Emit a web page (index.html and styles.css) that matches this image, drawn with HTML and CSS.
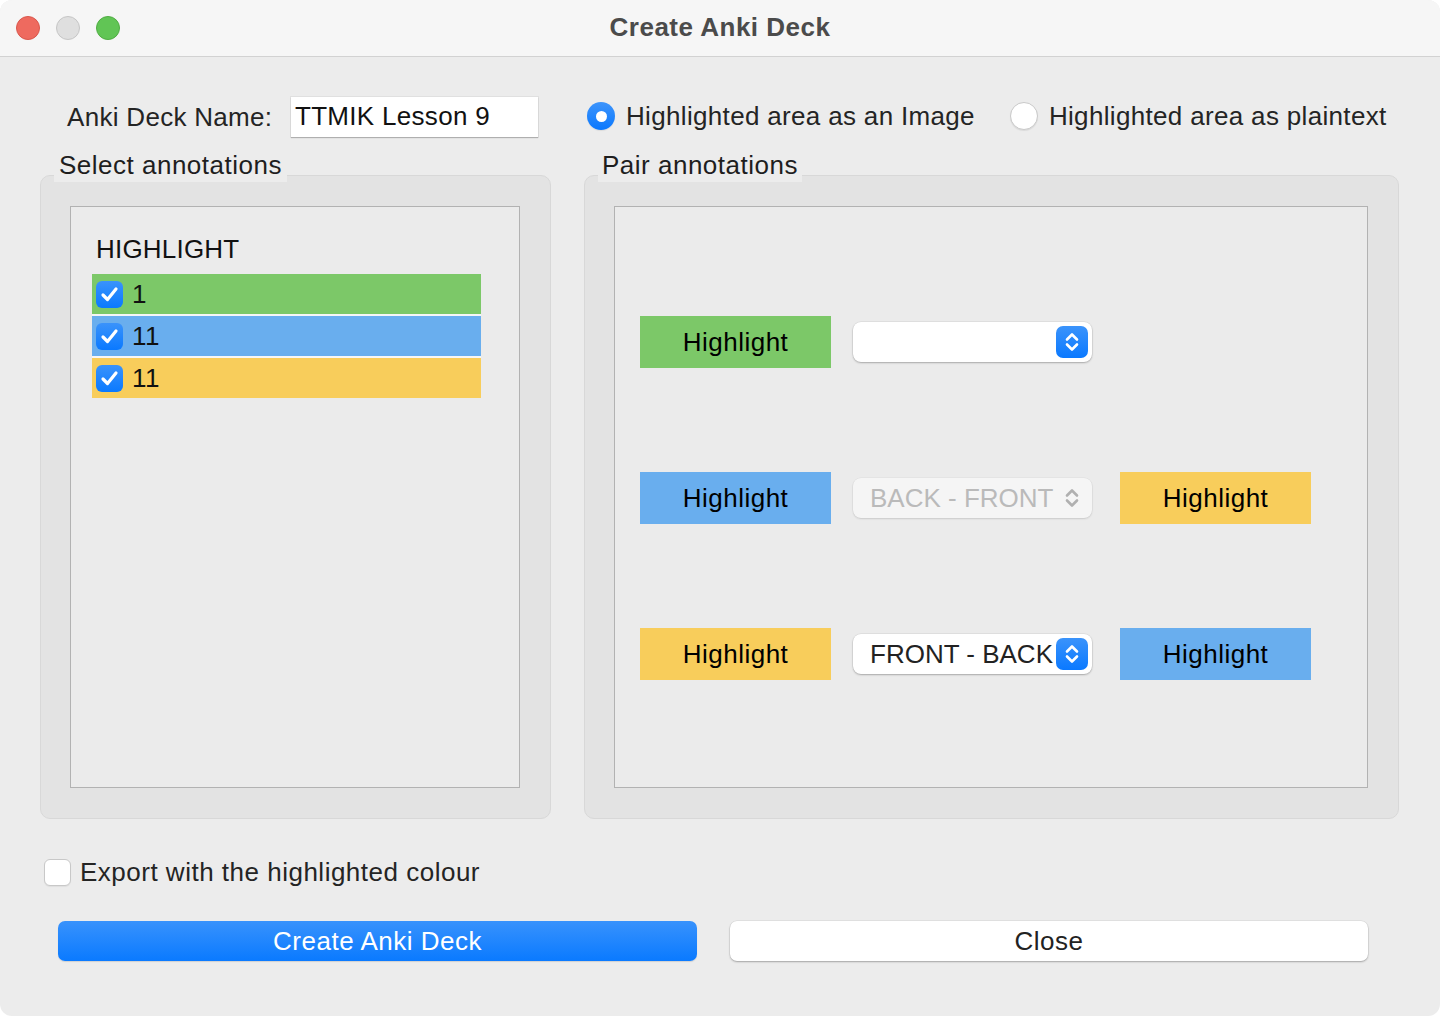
FILE: index.html
```html
<!DOCTYPE html>
<html>
<head>
<meta charset="utf-8">
<title>Create Anki Deck</title>
<link rel="stylesheet" href="styles.css">
</head>
<body>
<div class="window">
  <div class="titlebar">
    <div class="lights">
      <span class="light red"></span>
      <span class="light gray"></span>
      <span class="light green"></span>
    </div>
    <div class="title">Create Anki Deck</div>
    <div></div>
  </div>

  <div class="content">
    <div class="top-row">
      <span class="deck-label">Anki Deck Name:</span>
      <div class="text-input">TTMIK Lesson 9</div>
      <div class="radio-opt first">
        <span class="radio on"><span class="dot"></span></span>
        <span>Highlighted area as an Image</span>
      </div>
      <div class="radio-opt">
        <span class="radio"></span>
        <span>Highlighted area as plaintext</span>
      </div>
    </div>

    <div class="groups">
      <div class="group-wrap left">
        <div class="group-title">Select annotations</div>
        <div class="group">
          <div class="frame list-frame">
            <div class="list-head">HIGHLIGHT</div>
            <div class="rows">
              <div class="row green">
                <span class="cb checked"><svg width="27" height="27" viewBox="0 0 27 27"><path d="M7 14 L11.5 18.5 L20 8" fill="none" stroke="#fff" stroke-width="3.2" stroke-linecap="round" stroke-linejoin="round"/></svg></span>
                <span>1</span>
              </div>
              <div class="row blue">
                <span class="cb checked"><svg width="27" height="27" viewBox="0 0 27 27"><path d="M7 14 L11.5 18.5 L20 8" fill="none" stroke="#fff" stroke-width="3.2" stroke-linecap="round" stroke-linejoin="round"/></svg></span>
                <span>11</span>
              </div>
              <div class="row yellow">
                <span class="cb checked"><svg width="27" height="27" viewBox="0 0 27 27"><path d="M7 14 L11.5 18.5 L20 8" fill="none" stroke="#fff" stroke-width="3.2" stroke-linecap="round" stroke-linejoin="round"/></svg></span>
                <span>11</span>
              </div>
            </div>
          </div>
        </div>
      </div>

      <div class="group-wrap right">
        <div class="group-title">Pair annotations</div>
        <div class="group">
          <div class="frame pair-frame">
            <div class="pair">
              <div class="hl green">Highlight</div>
              <div class="combo">
                <span class="combo-text"></span>
                <span class="stepper"><svg width="32" height="32" viewBox="0 0 32 32"><path d="M11 13.5 L16 8.5 L21 13.5 M11 18.5 L16 23.5 L21 18.5" fill="none" stroke="#fff" stroke-width="2.6" stroke-linecap="round" stroke-linejoin="round"/></svg></span>
              </div>
            </div>
            <div class="pair">
              <div class="hl blue">Highlight</div>
              <div class="combo disabled">
                <span class="combo-text">BACK - FRONT</span>
                <span class="stepper plain"><svg width="32" height="32" viewBox="0 0 32 32"><path d="M11 13.5 L16 8.5 L21 13.5 M11 18.5 L16 23.5 L21 18.5" fill="none" stroke="#b0b0b0" stroke-width="2.6" stroke-linecap="round" stroke-linejoin="round"/></svg></span>
              </div>
              <div class="hl yellow partner">Highlight</div>
            </div>
            <div class="pair">
              <div class="hl yellow">Highlight</div>
              <div class="combo">
                <span class="combo-text">FRONT - BACK</span>
                <span class="stepper"><svg width="32" height="32" viewBox="0 0 32 32"><path d="M11 13.5 L16 8.5 L21 13.5 M11 18.5 L16 23.5 L21 18.5" fill="none" stroke="#fff" stroke-width="2.6" stroke-linecap="round" stroke-linejoin="round"/></svg></span>
              </div>
              <div class="hl blue partner">Highlight</div>
            </div>
          </div>
        </div>
      </div>
    </div>

    <div class="export-row">
      <span class="cb empty"></span>
      <span>Export with the highlighted colour</span>
    </div>

    <div class="buttons">
      <div class="btn primary">Create Anki Deck</div>
      <div class="btn">Close</div>
    </div>
  </div>
</div>
</body>
</html>
```

FILE: styles.css
```css
* { box-sizing: border-box; }

html, body {
  margin: 0;
  padding: 0;
  background: #ffffff;
}

.window {
  width: 1440px;
  height: 1016px;
  border-radius: 12px;
  overflow: hidden;
  background: #ececec;
  font-family: "Liberation Sans", Arial, sans-serif;
  font-size: 26px;
  letter-spacing: 0.5px;
  color: #242424;
}

.titlebar {
  height: 57px;
  background: #f6f6f6;
  border-bottom: 1px solid #d2d2d2;
  display: grid;
  grid-template-columns: 1fr auto 1fr;
  align-items: center;
}

.lights {
  display: flex;
  gap: 16px;
  padding-left: 16px;
  padding-bottom: 1px;
}

.light {
  width: 24px;
  height: 24px;
  border-radius: 50%;
  display: block;
}
.light.red { background: #ee6a5f; border: 1px solid #d9574c; }
.light.gray { background: #dfdfdf; border: 1px solid #c6c6c6; }
.light.green { background: #61c555; border: 1px solid #50ad43; }

.title {
  font-weight: bold;
  color: #4b4b4b;
  font-size: 26px;
  padding-bottom: 1px;
}

.content {
  padding: 40px 41px 0 40px;
}

.top-row {
  display: flex;
  align-items: center;
  height: 40px;
  padding-left: 27px;
}

.deck-label {
  width: 224px;
  flex: none;
  letter-spacing: 0.3px;
}

.text-input {
  width: 247px;
  height: 40px;
  background: #ffffff;
  box-shadow: 0 1px 1px rgba(0,0,0,0.22), 0 0 0 1px rgba(0,0,0,0.05);
  padding: 4px 0 0 4px;
  line-height: 30px;
  color: #111;
  letter-spacing: 0.3px;
}

.radio-opt {
  display: flex;
  align-items: center;
  gap: 11px;
  margin-left: 35px;
  margin-top: -2px;
  letter-spacing: 0.33px;
  white-space: nowrap;
}
.radio-opt.first { margin-left: 49px; }

.radio {
  width: 28px;
  height: 28px;
  border-radius: 50%;
  background: #fff;
  border: 1px solid #c9c9c9;
  box-shadow: 0 1px 1px rgba(0,0,0,0.08);
  display: flex;
  align-items: center;
  justify-content: center;
  flex: none;
}
.radio.on {
  border: none;
  background: linear-gradient(#3d94fb, #0a78fe);
}
.radio .dot {
  width: 11px;
  height: 11px;
  border-radius: 50%;
  background: #fff;
}

.groups {
  display: flex;
  gap: 33px;
  margin-top: 13px;
}

.group-wrap { display: flex; flex-direction: column; }
.group-wrap.left { width: 511px; }
.group-wrap.right { width: 815px; }

.group-title {
  align-self: flex-start;
  margin-left: 14px;
  padding: 0 5px 2px 5px;
  line-height: 30px;
  background: #ececec;
  position: relative;
  z-index: 1;
  margin-bottom: -7px;
  color: #1e1e1e;
}
.group-wrap.right .group-title { padding: 0 4px 2px 4px; }

.group {
  height: 644px;
  background: #e3e3e3;
  border: 1px solid #d8d8d8;
  border-radius: 10px;
  padding: 30px 30px 30px 29px;
}

.frame {
  height: 582px;
  border: 1px solid #b2b2b2;
  background: #ebebeb;
}

.list-frame {
  padding: 27px 0 0 21px;
}

.list-head {
  margin-left: 4px;
  line-height: 30px;
  color: #111;
  letter-spacing: 0.2px;
}

.rows {
  margin-top: 10px;
  width: 389px;
  display: flex;
  flex-direction: column;
  gap: 2px;
  background: #f6f6f6;
}

.row {
  height: 40px;
  display: flex;
  align-items: center;
  gap: 9px;
  padding-left: 4px;
  color: #111;
}

.green { background: #7cc868; }
.blue { background: #69aeee; }
.yellow { background: #f8cd5b; }

.cb {
  width: 27px;
  height: 27px;
  border-radius: 6px;
  display: block;
  flex: none;
}
.cb svg { display: block; }
.cb.checked {
  background: linear-gradient(#3a93fb, #0a79ff);
}
.cb.empty {
  background: #fff;
  border: 1px solid #c8c8c8;
  box-shadow: 0 1px 1px rgba(0,0,0,0.06);
}

.pair-frame {
  padding: 109px 0 0 25px;
  display: flex;
  flex-direction: column;
  gap: 104px;
}

.pair {
  display: flex;
  align-items: center;
  height: 52px;
}

.hl {
  width: 191px;
  height: 52px;
  display: flex;
  align-items: center;
  justify-content: center;
  color: #000;
  flex: none;
}
.hl.partner { margin-left: 28px; }

.combo {
  margin-left: 22px;
  width: 239px;
  height: 40px;
  border-radius: 8px;
  background: #fff;
  box-shadow: 0 1px 2px rgba(0,0,0,0.25), 0 0 0 0.5px rgba(0,0,0,0.08);
  display: flex;
  align-items: center;
  justify-content: space-between;
  padding: 0 4px 0 17px;
  flex: none;
  color: #222;
  letter-spacing: 0;
}
.combo-text {
  white-space: nowrap;
}
.combo.disabled {
  background: #f5f5f5;
  color: #bababa;
  box-shadow: 0 1px 2px rgba(0,0,0,0.12), 0 0 0 0.5px rgba(0,0,0,0.05);
}

.stepper {
  width: 32px;
  height: 32px;
  border-radius: 7px;
  background: linear-gradient(#3a93fb, #0a79ff);
  display: block;
  flex: none;
}
.stepper svg { display: block; }
.stepper.plain { background: none; }

.export-row {
  display: flex;
  align-items: center;
  gap: 9px;
  margin-top: 40px;
  margin-left: 4px;
  height: 27px;
}

.buttons {
  display: flex;
  gap: 33px;
  margin-top: 35px;
  margin-left: 18px;
}

.btn {
  width: 638px;
  height: 40px;
  border-radius: 7px;
  background: #fff;
  box-shadow: 0 1px 2px rgba(0,0,0,0.28), 0 0 0 0.5px rgba(0,0,0,0.08);
  display: flex;
  align-items: center;
  justify-content: center;
  color: #222;
}
.btn.primary {
  width: 639px;
  background: linear-gradient(#3892fc, #0a7aff);
  color: #fff;
  box-shadow: 0 1px 1px rgba(0,0,0,0.12);
}
```
